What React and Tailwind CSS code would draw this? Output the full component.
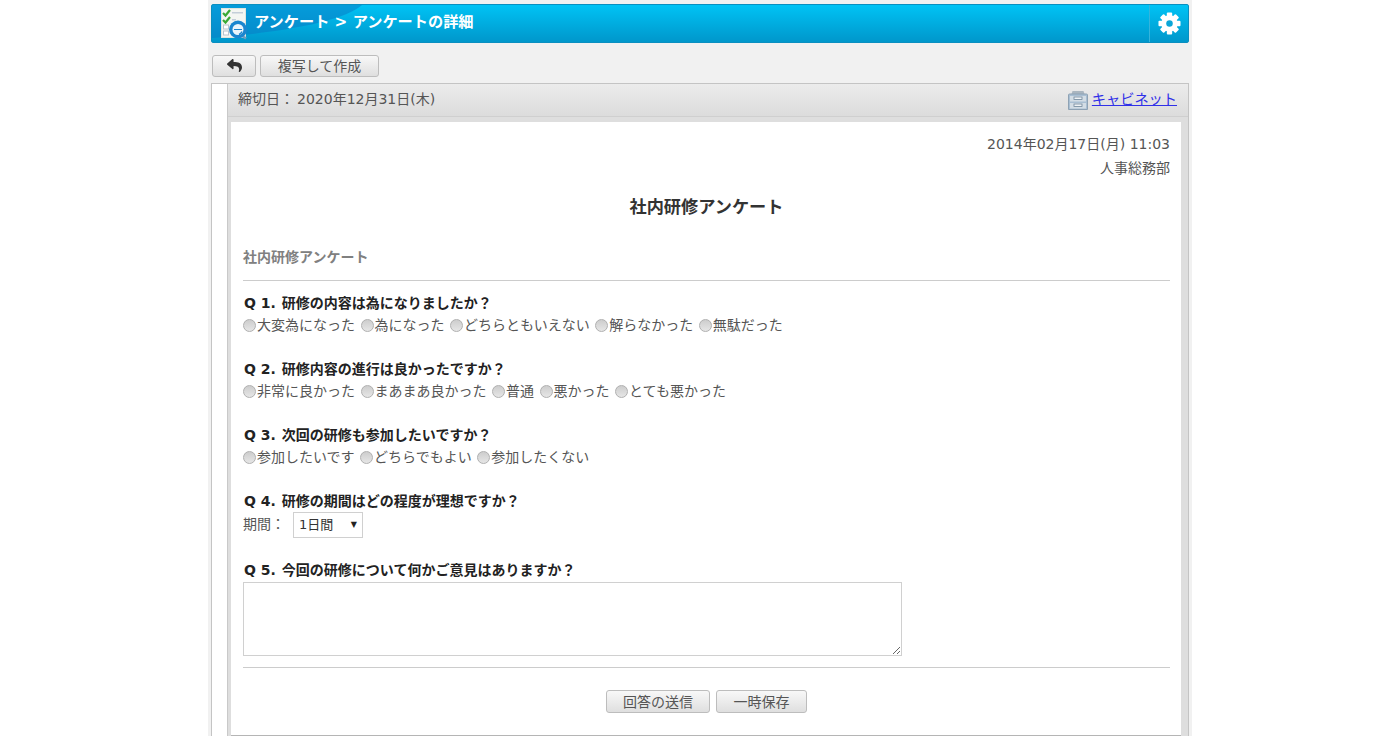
import React from "react";
import { FaReply } from "react-icons/fa";

const font = "font-['DejaVu_Sans','Noto_Sans_CJK_JP',sans-serif]";

const questions = [
  {
    label: "Q 1.",
    title: "研修の内容は為になりましたか？",
    options: ["大変為になった", "為になった", "どちらともいえない", "解らなかった", "無駄だった"],
  },
  {
    label: "Q 2.",
    title: "研修内容の進行は良かったですか？",
    options: ["非常に良かった", "まあまあ良かった", "普通", "悪かった", "とても悪かった"],
  },
  {
    label: "Q 3.",
    title: "次回の研修も参加したいですか？",
    options: ["参加したいです", "どちらでもよい", "参加したくない"],
  },
];

const Logo = () => (
  <svg width="27" height="32" viewBox="0 0 27 32">
    <rect x="0.5" y="0.5" width="24" height="29" fill="#f3f6f2" stroke="#dfe5df" />
    <path d="M2 5l2.5 2.5L9 2" fill="none" stroke="#3aa935" strokeWidth="2.2" />
    <path d="M2 12l2.5 2.5L9 9" fill="none" stroke="#3aa935" strokeWidth="2.2" />
    <rect x="11" y="4" width="11" height="1.5" fill="#c3ced8" />
    <rect x="11" y="11" width="4" height="1.5" fill="#c3ced8" />
    <rect x="2.5" y="17" width="5" height="4" fill="#fff" stroke="#b8c4ce" />
    <rect x="2.5" y="23" width="5" height="4" fill="#fff" stroke="#b8c4ce" />
    <path d="M20 27l5 3.5" stroke="#6f9dbf" strokeWidth="2.5" />
    <circle cx="17" cy="21.5" r="9" fill="#1a86cf" />
    <circle cx="17" cy="21.5" r="5.5" fill="#eaf5fb" />
    <path d="M13 21.5h8" stroke="#1a86cf" strokeWidth="1" />
    <path d="M21 23.5a5 5 0 0 1-3 3" stroke="#1a86cf" strokeWidth="1.4" fill="none" />
  </svg>
);

const Gear = () => (
  <svg width="23" height="23" viewBox="0 0 24 24">
    <g fill="#fff">
      <circle cx="12" cy="12" r="8.5" />
      {[0, 45, 90, 135, 180, 225, 270, 315].map((a) => (
        <rect key={a} x="9.2" y="0.5" width="5.6" height="6" rx="1" transform={`rotate(${a} 12 12)`} />
      ))}
    </g>
    <circle cx="12" cy="12" r="3.4" fill="#0aa6d8" />
  </svg>
);

const Cabinet = () => (
  <svg width="20" height="20" viewBox="0 0 20 20">
    <path d="M3 5.5L4.5 1h11L17 5.5z" fill="#aab6c0" />
    <path d="M0.5 19.5V5q0-1 1-1h17q1 0 1 1v14.5z" fill="#a9bfd3" stroke="#8ea2b4" />
    <rect x="2" y="6" width="16" height="5.5" fill="#d3dde5" />
    <rect x="2" y="13" width="16" height="5.5" fill="#d3dde5" />
    <rect x="6" y="7" width="8" height="2.4" fill="#eef2f5" stroke="#70879c" strokeWidth="0.8" />
    <rect x="6" y="14" width="8" height="2.4" fill="#eef2f5" stroke="#70879c" strokeWidth="0.8" />
  </svg>
);

const GrayButton = ({ children, className = "" }) => (
  <button
    className={`flex items-center justify-center rounded-[3px] border border-[#bdbdbd] bg-gradient-to-b from-[#f8f8f8] to-[#dfdfdf] text-[14px] leading-none text-[#555] ${className}`}
  >
    {children}
  </button>
);

const Radio = ({ text }) => (
  <span className="flex items-center mr-[5.5px]">
    <span className="w-[13px] h-[13px] mr-[1px] rounded-full border border-[#b0b0b0] bg-gradient-to-b from-[#cdcdcd] to-[#e6e6e6]" />
    {text}
  </span>
);

const QuestionTitle = ({ label, title }) => (
  <div className="h-[20px] flex items-center pl-[1px] text-[14px] font-bold text-[#222]">
    <span className="mr-[6px] whitespace-nowrap">{label}</span>
    {title}
  </div>
);

export default function App() {
  return (
    <div className={`h-[736px] overflow-hidden bg-white ${font}`}>
      <div className="w-[984px] h-full ml-[208px] bg-[#f1f1f1] px-[3px] pt-[4px]">
        {/* header */}
        <div className="relative h-[39px] flex items-center rounded-[2px] border border-[#0a8fc0] bg-gradient-to-b from-[#00c3f5] to-[#0097cb]">
          <svg className="absolute left-0 top-0" width="150" height="37" viewBox="0 0 150 37">
            <path d="M0 0H150Q125 22 0 33Z" fill="#0a7cc4" fillOpacity="0.55" />
          </svg>
          <div className="relative ml-[9px] mr-[6px] flex mt-[1px]">
            <Logo />
          </div>
          <div className="relative flex-1 pb-[3px] text-[15.2px] font-bold text-white">アンケート &gt; アンケートの詳細</div>
          <div className="relative w-[39px] h-full flex items-center justify-center border-l border-[#36b4dc]">
            <Gear />
          </div>
        </div>

        {/* toolbar */}
        <div className="h-[40px] flex items-center gap-[4px] pt-[5px]">
          <GrayButton className="w-[44px] h-[22px] ml-[1px]">
            <FaReply className="text-[#333] text-[15px]" />
          </GrayButton>
          <GrayButton className="w-[119px] h-[22px]">複写して作成</GrayButton>
        </div>

        {/* panel */}
        <div className="h-[660px] border border-[#c4c4c4] bg-white pl-[15px]">
          <div className="h-full border-l border-[#c9c9c9] bg-[#dedede]">
            <div className="h-[33px] flex items-center justify-between pl-[10px] pr-[11px] border-b border-[#cfcfcf] bg-gradient-to-b from-[#ececec] to-[#dcdcdc] text-[14px] text-[#555]">
              <span className="pb-[2px]">
                締切日：<span className="ml-[3px]">2020年12月31日(木)</span>
              </span>
              <span className="flex items-center gap-[4px]">
                <Cabinet />
                <a className="text-[14.2px] text-[#3030e8] underline">キャビネット</a>
              </span>
            </div>

            <div className="h-[614px] ml-[3px] mr-[7px] mt-[5px] bg-white pl-[12px] pr-[11px] border-b border-[#b5b5b5] text-[14px] text-[#555]">
              <div className="pt-[11px] text-right leading-[22px]">2014年02月17日(月) 11:03</div>
              <div className="mt-[2px] text-right leading-[22px]">人事総務部</div>
              <div className="mt-[17px] h-[24px] flex items-center justify-center text-[17.2px] font-bold text-[#333]">
                社内研修アンケート
              </div>
              <div className="mt-[27px] h-[20px] flex items-center font-bold text-[#808080]">社内研修アンケート</div>
              <div className="mt-[13px] border-t border-[#cccccc]" />

              <div className="mt-[12px] flex flex-col gap-[24px]">
                {questions.map((q) => (
                  <div key={q.label}>
                    <QuestionTitle label={q.label} title={q.title} />
                    <div className="h-[20px] mt-[2px] flex items-center">
                      {q.options.map((o) => (
                        <Radio key={o} text={o} />
                      ))}
                    </div>
                  </div>
                ))}
              </div>

              <div className="mt-[24px]">
                <QuestionTitle label="Q 4." title="研修の期間はどの程度が理想ですか？" />
                <div className="mt-[1px] flex items-start">
                  <span className="w-[50px] pt-[2px] leading-[20px]">期間：</span>
                  <div className="relative w-[70px] h-[26px]">
                    <select className="w-full h-full appearance-none border border-[#d0d0d0] bg-white pl-[5px] text-[13px] text-[#333]">
                      <option>1日間</option>
                    </select>
                    <span className="absolute right-[6px] top-[6px] text-[8px] leading-[14px] text-[#222]">▼</span>
                  </div>
                </div>
              </div>

              <div className="mt-[22px]">
                <QuestionTitle label="Q 5." title="今回の研修について何かご意見はありますか？" />
                <textarea className="block mt-[2px] w-[659px] h-[74px] border border-[#d0d0d0] bg-white" />
              </div>

              <div className="mt-[11px] border-t border-[#cccccc]" />
              <div className="mt-[22px] flex justify-center gap-[6px]">
                <GrayButton className="w-[104px] h-[23px]">回答の送信</GrayButton>
                <GrayButton className="w-[91px] h-[23px]">一時保存</GrayButton>
              </div>
            </div>
          </div>
        </div>
      </div>
    </div>
  );
}
